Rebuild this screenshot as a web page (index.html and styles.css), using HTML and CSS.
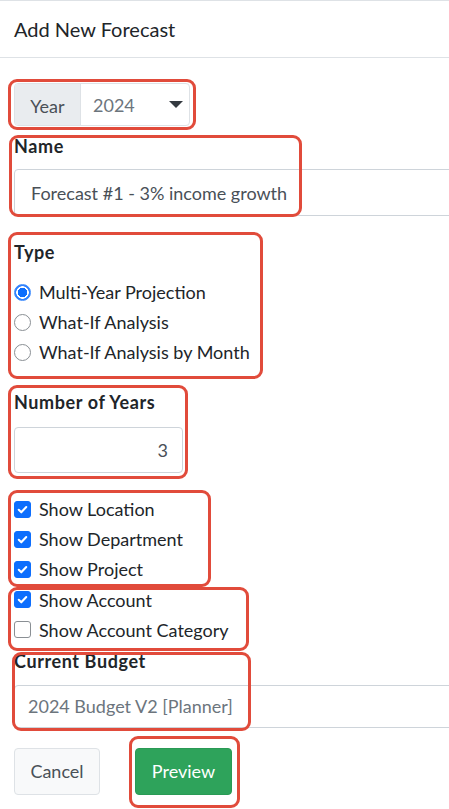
FILE: index.html
```html
<!DOCTYPE html>
<html>
<head>
<meta charset="utf-8">
<link rel="stylesheet" href="styles.css">
</head>
<body>
<div class="page">
  <div class="header">Add New Forecast</div>
  <div class="content">
    <div class="input-group">
      <span class="addon">Year</span>
      <div class="select">
        <span class="select-value">2024</span>
        <span class="caret"></span>
      </div>
    </div>

    <div class="field field-name">
      <div class="label">Name</div>
      <div class="input input-name">Forecast #1 - 3% income growth</div>
    </div>

    <div class="field field-type">
      <div class="label">Type</div>
      <div class="options">
        <label class="option"><span class="radio checked"></span>Multi-Year Projection</label>
        <label class="option"><span class="radio"></span>What-If Analysis</label>
        <label class="option"><span class="radio"></span>What-If Analysis by Month</label>
      </div>
    </div>

    <div class="field field-years">
      <div class="label">Number of Years</div>
      <div class="input input-years">3</div>
    </div>

    <div class="checks">
      <label class="option opt-check"><span class="check checked"><svg viewBox="0 0 16 16"><path d="M4 8.3l2.7 2.7L12 5.3" fill="none" stroke="#fff" stroke-width="2.2" stroke-linecap="round" stroke-linejoin="round"/></svg></span>Show Location</label>
      <label class="option opt-check"><span class="check checked"><svg viewBox="0 0 16 16"><path d="M4 8.3l2.7 2.7L12 5.3" fill="none" stroke="#fff" stroke-width="2.2" stroke-linecap="round" stroke-linejoin="round"/></svg></span>Show Department</label>
      <label class="option opt-check"><span class="check checked"><svg viewBox="0 0 16 16"><path d="M4 8.3l2.7 2.7L12 5.3" fill="none" stroke="#fff" stroke-width="2.2" stroke-linecap="round" stroke-linejoin="round"/></svg></span>Show Project</label>
      <label class="option opt-check"><span class="check checked"><svg viewBox="0 0 16 16"><path d="M4 8.3l2.7 2.7L12 5.3" fill="none" stroke="#fff" stroke-width="2.2" stroke-linecap="round" stroke-linejoin="round"/></svg></span>Show Account</label>
      <label class="option opt-check"><span class="check"></span>Show Account Category</label>
    </div>

    <div class="field field-budget">
      <div class="label">Current Budget</div>
      <div class="input input-budget">2024 Budget V2 [Planner]</div>
    </div>

    <div class="buttons">
      <button class="btn btn-cancel">Cancel</button>
      <button class="btn btn-preview">Preview</button>
    </div>
  </div>

  <div class="mark mark-year"></div>
  <div class="mark mark-name"></div>
  <div class="mark mark-type"></div>
  <div class="mark mark-years"></div>
  <div class="mark mark-checks"></div>
  <div class="mark mark-account"></div>
  <div class="mark mark-budget"></div>
  <div class="mark mark-preview"></div>
</div>
</body>
</html>
```

FILE: styles.css
```css
* { box-sizing: border-box; }
html, body { margin: 0; padding: 0; background: #fff; }
body {
  font-family: "Lato", "Open Sans", sans-serif;
  color: #212529;
  font-size: 18px;
}
.page {
  position: relative;
  width: 449px;
  height: 809px;
  overflow: hidden;
  border-top: 1px solid #dee2e6;
}
.header {
  height: 57px;
  padding-left: 14px;
  display: flex;
  align-items: center;
  font-size: 20px;
  color: #212529;
  border-bottom: 1px solid #dee2e6;
}
.content {
  padding: 25px 0 0 14px;
}
.input-group {
  display: flex;
  width: 176px;
  height: 43px;
  border: 1px solid #dee2e6;
  border-radius: 4px;
  overflow: hidden;
}
.addon {
  width: 66px;
  background: #e9ecef;
  color: #495057;
  display: flex;
  align-items: center;
  justify-content: center;
  padding-top: 2px;
  border-right: 1px solid #dee2e6;
}
.select {
  flex: 1;
  display: flex;
  align-items: center;
  justify-content: space-between;
  padding: 0 6px 0 12px;
  color: #6c757d;
}
.caret {
  width: 0;
  height: 0;
  border-left: 7px solid transparent;
  border-right: 7px solid transparent;
  border-top: 7px solid #343a40;
}
.label {
  font-weight: 700;
  line-height: 26px;
  letter-spacing: 0.6px;
}
.field-name { margin-top: 7px; }
.input {
  border: 1px solid #ced4da;
  border-radius: 4px;
  display: flex;
  align-items: center;
  color: #495057;
}
.input-name {
  margin-top: 10px;
  height: 47px;
  width: 460px;
  padding-left: 16px;
}
.field-type { margin-top: 23px; }
.options { margin-top: 12px; }
.option {
  display: flex;
  align-items: center;
  height: 30px;
  color: #212529;
}
.opt-check { height: 30.2px; }
.radio {
  width: 17px;
  height: 17px;
  border: 1px solid #8a8f94;
  border-radius: 50%;
  margin-right: 8px;
  flex: none;
}
.radio.checked {
  border: 1px solid #3d8bfd;
  background: radial-gradient(circle, #0d6efd 0 4.5px, #fff 5px 6px, #2f80fd 6.5px);
}
.field-years { margin-top: 22px; }
.input-years {
  margin-top: 12px;
  width: 169px;
  height: 46px;
  justify-content: flex-end;
  padding-right: 14px;
}
.checks { margin-top: 21px; }
.check {
  width: 17px;
  height: 17px;
  border: 1px solid #8a8f94;
  border-radius: 3px;
  margin-right: 8px;
  flex: none;
  display: flex;
}
.check.checked {
  background: #0d6efd;
  border-color: #0d6efd;
}
.check svg { width: 100%; height: 100%; }
.field-budget { margin-top: 3px; }
.input-budget {
  margin-top: 11px;
  height: 43px;
  width: 460px;
  padding-left: 13px;
  color: #6c757d;
}
.buttons {
  margin-top: 20px;
  display: flex;
  gap: 35px;
}
.btn {
  font-family: inherit;
  font-size: 18px;
  height: 47px;
  border-radius: 4px;
  padding: 0 15px;
}
.btn-cancel {
  width: 86px;
  background: #f8f9fa;
  border: 1px solid #dee2e6;
  color: #495057;
}
.btn-preview {
  width: 97px;
  background: #2ea35b;
  border: 1px solid #2a9a55;
  color: #fff;
}
.mark {
  position: absolute;
  border: 3px solid #e14b3b;
  border-radius: 9px;
}
.mark-year { left: 8px; top: 78px; width: 188px; height: 51px; }
.mark-name { left: 9px; top: 134px; width: 293px; height: 82px; }
.mark-type { left: 8px; top: 231px; width: 255px; height: 147px; }
.mark-years { left: 8px; top: 384px; width: 180px; height: 94px; }
.mark-checks { left: 8px; top: 489px; width: 203px; height: 97px; }
.mark-account { left: 8px; top: 586px; width: 241px; height: 64px; }
.mark-budget { left: 12px; top: 651px; width: 239px; height: 79px; }
.mark-preview { left: 129px; top: 735px; width: 111px; height: 72px; }
```
